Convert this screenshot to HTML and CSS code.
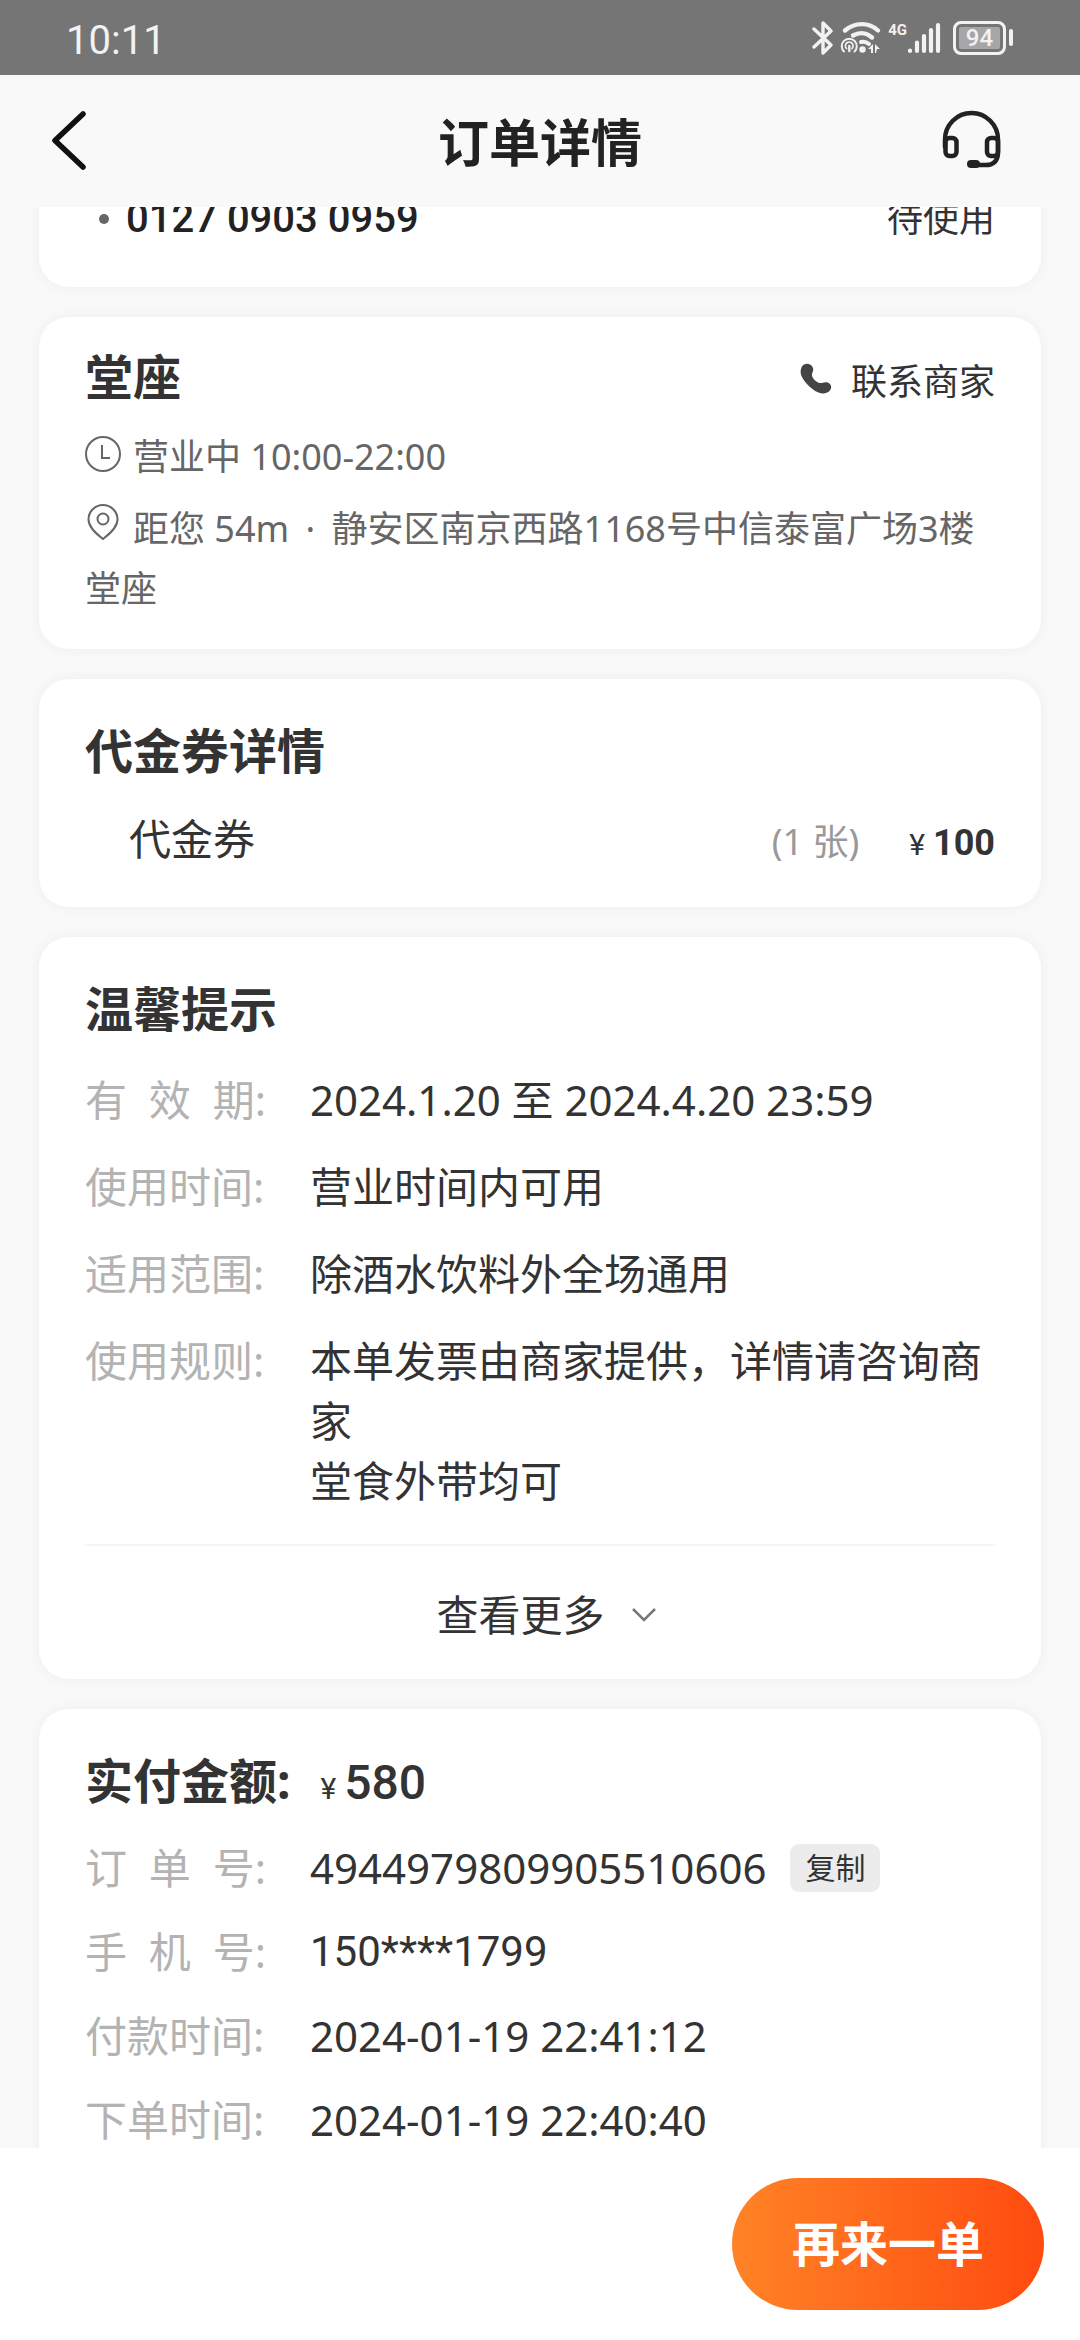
FILE: index.html
```html
<!DOCTYPE html>
<html lang="zh-CN">
<head>
  <meta charset="utf-8">
  <meta name="viewport" content="width=device-width, initial-scale=1">
  <title>订单详情</title>
  <link rel="stylesheet" href="styles.css">
</head>
<body>
  <div class="status-bar">
    <span class="status-time">10:11</span>
    <div class="status-icons">
      <svg class="icon-bluetooth" width="22" height="36" viewBox="0 0 22 36" aria-hidden="true">
        <path d="M2 9l17 16-8 8V3l8 8L2 27" fill="none" stroke="currentColor" stroke-width="3.4" stroke-linejoin="round" stroke-linecap="round"/>
      </svg>
      <svg class="icon-wifi" width="42" height="36" viewBox="0 0 42 36" aria-hidden="true">
        <g fill="none" stroke="currentColor" stroke-linecap="round">
          <path d="M5 10.500c10-8.500 24-8.500 33 0" stroke-width="4.400"/>
          <path d="M13 15.500c7-4 14-2.500 19 2" stroke-width="4.400"/>
          <path d="M21 22c3.500-.8 6 .2 8 2" stroke-width="4"/>
          <path d="M4 31.500a7.500 7.500 0 1 1 10.500 0" stroke-width="2"/>
          <path d="M6.500 28.500a3.800 3.800 0 1 1 5.500 0" stroke-width="1.800"/>
          <path d="M9.300 26v5" stroke-width="2.400"/>
        </g>
        <circle cx="22.500" cy="29.500" r="3.200" fill="currentColor"/>
        <path d="M33 24v9h-2v-4h-3zM35 24l5 5h-3l-1 4h-1z" fill="currentColor"/>
      </svg>
      <div class="cellular">
        <span class="cellular-type">4G</span>
        <svg width="34" height="32" viewBox="0 0 34 32" aria-hidden="true">
          <path d="M3 28.500v.5M10 20.500V29M17 14v15M24 8v21M31 3v26" fill="none" stroke="currentColor" stroke-width="4.200" stroke-linecap="round"/>
        </svg>
      </div>
      <div class="battery"><span class="battery-level">94</span></div>
    </div>
  </div>

  <header class="nav">
    <button class="nav-button" type="button" aria-label="返回">
      <svg width="40" height="64" viewBox="0 0 40 64" aria-hidden="true">
        <path d="M34 5L6 31.500 34 58" fill="none" stroke="#111" stroke-width="5.500" stroke-linecap="round" stroke-linejoin="round"/>
      </svg>
    </button>
    <h1 class="nav-title">订单详情</h1>
    <button class="nav-button nav-button-end" type="button" aria-label="客服">
      <svg width="64" height="64" viewBox="0 0 64 64" aria-hidden="true">
        <g fill="none" stroke="#222" stroke-width="4.500" stroke-linecap="round">
          <path d="M5 38v-7.500a26.500 26.500 0 0 1 53 0V44c0 8-5 12-12 12H32"/>
          <rect x="5.500" y="29" width="11" height="18" rx="4"/>
          <rect x="47" y="29" width="11" height="18" rx="4"/>
        </g>
        <rect x="27" y="51" width="13" height="8" rx="4" fill="#222"/>
      </svg>
    </button>
  </header>

  <main class="content">
    <div class="card-list">
      <section class="card">
        <div class="code-row">
          <span class="code-bullet"></span>
          <span class="code-number">0127 0903 0959</span>
          <span class="code-status">待使用</span>
        </div>
      </section>

      <section class="card card-shop">
        <div class="shop-head">
          <h2 class="card-title">堂座</h2>
          <a class="contact" href="#contact">
            <svg class="contact-icon" width="32" height="32" viewBox="0 0 32 32" aria-hidden="true">
              <path d="M2 3.500C4.500-.5 11 0 13 5c1 3-1.500 5-1 7.500.5 3 4 6.500 7.500 7.500 2.500.6 4.500-1.500 8-.5 4.500 1.500 4.500 6 2 8.500-4 4-11 3-17-2C5 20 0 13 .7 8c.2-2 .5-3.300 1.300-4.500z" fill="#444"/>
            </svg>联系商家</a>
        </div>
        <p class="shop-hours"><svg class="icon-clock" width="36" height="36" viewBox="0 0 36 36" aria-hidden="true"><g fill="none" stroke="currentColor" stroke-width="2"><circle cx="18" cy="18" r="17"/><path d="M17 9v13h8"/></g></svg>营业中 10:00-22:00</p>
        <p class="shop-address"><svg class="icon-pin" width="36" height="36" viewBox="0 0 36 36" aria-hidden="true"><g fill="none" stroke="currentColor" stroke-width="2" stroke-linejoin="round"><path d="M18 35C13 31 3.500 24 3.500 15.500a14.500 14.500 0 0 1 29 0C32.500 24 23 31 18 35z"/><circle cx="18" cy="15" r="5.500"/></g></svg>距您 54m <span class="dot">·</span> 静安区南京西路1168号中信泰富广场3楼堂座</p>
      </section>

      <section class="card">
        <h2 class="card-title">代金券详情</h2>
        <div class="voucher-row">
          <span class="voucher-name">代金券</span>
          <span class="voucher-count">(1 张)</span>
          <span class="voucher-price"><span class="yen">¥</span>100</span>
        </div>
      </section>

      <section class="card card-tips">
        <h2 class="card-title">温馨提示</h2>
        <dl class="tips">
          <dt>有&nbsp;&nbsp;效&nbsp;&nbsp;期:</dt><dd>2024.1.20 至 2024.4.20 23:59</dd>
          <dt>使用时间:</dt><dd>营业时间内可用</dd>
          <dt>适用范围:</dt><dd>除酒水饮料外全场通用</dd>
          <dt>使用规则:</dt><dd>本单发票由商家提供，详情请咨询商家<br>堂食外带均可</dd>
        </dl>
        <button class="more" type="button">查看更多
          <svg width="26" height="16" viewBox="0 0 26 16" aria-hidden="true"><path d="M2 2l11 11L24 2" fill="none" stroke="#777" stroke-width="2.500"/></svg>
        </button>
      </section>

      <section class="card">
        <h2 class="card-title">实付金额:<span class="total"><span class="yen">¥</span>580</span></h2>
        <dl class="order">
          <dt>订&nbsp;&nbsp;单&nbsp;&nbsp;号:</dt><dd class="order-number">4944979809905510606<button class="copy" type="button">复制</button></dd>
          <dt>手&nbsp;&nbsp;机&nbsp;&nbsp;号:</dt><dd class="order-phone">150****1799</dd>
          <dt>付款时间:</dt><dd>2024-01-19 22:41:12</dd>
          <dt>下单时间:</dt><dd>2024-01-19 22:40:40</dd>
        </dl>
      </section>
    </div>
  </main>

  <footer class="action-bar">
    <button class="reorder" type="button">再来一单</button>
  </footer>
</body>
</html>
```
FILE: styles.css
```css
* {
  box-sizing: border-box;
}

body {
  display: flex;
  flex-direction: column;
  height: 100vh;
  margin: 0;
  background: #f9f9f9;
  color: #333;
  font-family: "Noto Sans", "Noto Sans CJK SC", sans-serif;
  font-size: 42px;
  line-height: 60px;
}

h1, h2, p, dl, dd {
  margin: 0;
}

button {
  padding: 0;
  border: 0;
  background: none;
  color: inherit;
  font: inherit;
}

a {
  color: inherit;
  text-decoration: none;
}

svg {
  flex: none;
}

/* Status bar */
.status-bar {
  display: flex;
  flex: none;
  align-items: center;
  justify-content: space-between;
  height: 75px;
  padding: 0 67px 0 66px;
  background: #757575;
  color: #f2f2f2;
}

.status-time {
  padding-top: 6px;
  font-family: Roboto, sans-serif;
  font-size: 40px;
}

.status-icons {
  display: flex;
  align-items: center;
  gap: 6px;
}

.cellular {
  display: flex;
  align-items: flex-start;
}

.cellular-type {
  font: 700 15px/16px Roboto, sans-serif;
}

.battery {
  display: flex;
  align-items: center;
  width: 60px;
  margin-left: 6px;
}

.battery-level {
  width: 53px;
  height: 34px;
  border: 3px solid #f2f2f2;
  border-radius: 8px;
  background: #a6a6a6;
  box-shadow: inset 0 0 0 3px #757575;
  font: 500 24px/28px Roboto, sans-serif;
  text-align: center;
}

.battery::after {
  width: 4px;
  height: 17px;
  margin-left: 3px;
  border-radius: 2px;
  background: #f2f2f2;
  content: "";
}

/* Title bar */
.nav {
  display: grid;
  flex: none;
  grid-template-columns: 1fr auto 1fr;
  align-items: center;
  height: 132px;
  padding: 0 76px 0 49px;
}

.nav-button {
  display: flex;
  justify-self: start;
}

.nav-button-end {
  justify-self: end;
}

.nav-title {
  margin-left: 27px;
  padding-top: 2px;
  color: #222;
  font-size: 51px;
  font-weight: 700;
}

/* Cards */
.content {
  flex: 1;
  min-height: 0;
  overflow: hidden auto;
  scrollbar-width: none;
}

/* Opens partly scrolled, with the first code row under the title bar */
.card-list {
  display: flex;
  flex-direction: column;
  gap: 30px;
  margin-top: -60px;
  padding: 0 39px 30px;
}

.card {
  padding: 42px 46px 38px;
  border-radius: 30px;
  background: #fff;
  box-shadow: 0 0 14px rgba(0, 0, 0, 0.05);
}

.card-title {
  font-size: 48px;
  font-weight: 700;
}

.code-row {
  display: flex;
  align-items: center;
}

.code-bullet {
  width: 10px;
  height: 10px;
  margin: 0 17px 0 14px;
  border-radius: 50%;
  background: #666;
}

.code-number {
  flex: 1;
  color: #222;
  font-family: Roboto, sans-serif;
  font-size: 40px;
  font-weight: 500;
}

.code-status {
  font-size: 36px;
}

.card-shop {
  padding: 30px 46px;
  font-size: 36px;
}

.shop-head {
  display: flex;
  align-items: baseline;
  justify-content: space-between;
  height: 60px;
}

.contact-icon {
  margin-right: 19px;
}

.shop-hours,
.shop-address {
  color: #666;
}

.shop-hours {
  margin: 20px 0 12px;
}

.icon-clock,
.icon-pin {
  margin-right: 12px;
}

.icon-clock {
  vertical-align: -2px;
}

.icon-pin {
  vertical-align: 2px;
}

.dot {
  margin: 0 7px;
}

.voucher-row {
  display: flex;
  align-items: baseline;
  height: 60px;
  margin-top: 28px;
}

.voucher-name {
  flex: 1;
  padding-left: 44px;
}

.voucher-count {
  margin-right: 50px;
  color: #999;
  font-size: 36px;
}

.voucher-price {
  font-family: Roboto, sans-serif;
  font-size: 36px;
  font-weight: 700;
}

.yen {
  margin-right: 8px;
  font-size: 30px;
  font-weight: 400;
  line-height: 30px;
}

.total {
  margin-left: 30px;
  font-family: Roboto, sans-serif;
  font-weight: 500;
  line-height: 48px;
}

.card-tips {
  padding-bottom: 34px;
}

.tips,
.order {
  display: grid;
  grid-template-columns: 225px 1fr;
}

.tips {
  row-gap: 27px;
  margin-top: 31px;
}

.order {
  row-gap: 24px;
  margin-top: 27px;
}

dt {
  color: #b3b3b3;
}

.order-number {
  display: flex;
  align-items: center;
}

.order-phone {
  font-family: Roboto, sans-serif;
}

.copy {
  height: 48px;
  margin-left: 24px;
  padding: 0 15px;
  border-radius: 9px;
  background: #ececec;
  font-size: 30px;
  line-height: 48px;
}

.more {
  display: flex;
  align-items: center;
  justify-content: center;
  gap: 26px;
  width: 100%;
  margin-top: 33px;
  padding: 39px 0 0 13px;
  border-top: 2px solid #f5f5f5;
}

/* Bottom bar */
.action-bar {
  display: flex;
  flex: none;
  justify-content: flex-end;
  padding: 30px 36px;
  background: #fff;
}

.reorder {
  padding: 36px 60px;
  border-radius: 66px;
  background: linear-gradient(90deg, #ff8326, #ff4b10);
  color: #fff;
  font-size: 48px;
  font-weight: 700;
}
```
